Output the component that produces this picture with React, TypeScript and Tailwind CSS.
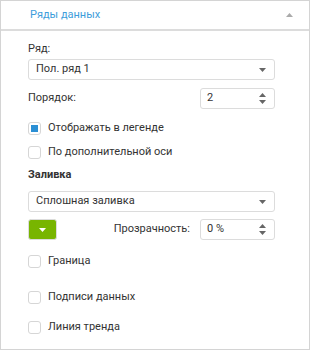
import type { ReactNode } from "react";

const font = { fontFamily: 'Roboto, "Noto Sans", sans-serif' };

function DownArrow({ className = "" }: { className?: string }) {
  return (
    <svg width="7" height="4" viewBox="0 0 7 4" className={className}>
      <path d="M0 0h7L3.5 4z" fill="currentColor" />
    </svg>
  );
}

function UpArrow({ className = "" }: { className?: string }) {
  return (
    <svg width="7" height="4" viewBox="0 0 7 4" className={className}>
      <path d="M0 4h7L3.5 0z" fill="currentColor" />
    </svg>
  );
}

function Select({ value }: { value: string }) {
  return (
    <div className="flex h-[21px] w-[247px] items-center justify-between rounded-[3px] border border-[#dcdcdc] bg-white pl-[7px] pr-[8px] text-[11px] text-[#333]">
      <span>{value}</span>
      <DownArrow className="text-[#666]" />
    </div>
  );
}

function Spinner({ value }: { value: string }) {
  return (
    <div className="flex h-[21px] w-[75px] items-center justify-between rounded-[3px] border border-[#dcdcdc] bg-white pl-[6px] pr-[8px] text-[11px] text-[#333]">
      <span>{value}</span>
      <div className="flex flex-col gap-[3px] text-[#666]">
        <UpArrow />
        <DownArrow />
      </div>
    </div>
  );
}

function Check({ checked, children, className = "" }: { checked?: boolean; children: ReactNode; className?: string }) {
  return (
    <div className={`flex h-[16px] items-center gap-[7px] text-[11px] text-[#333] ${className}`}>
      <span className="flex h-[13px] w-[13px] items-center justify-center rounded-[3px] border border-[#d6d6d6] bg-white">
        {checked ? <span className="h-[7px] w-[7px] bg-[#2b8fd4]" /> : null}
      </span>
      <span>{children}</span>
    </div>
  );
}

export default function App() {
  return (
    <div className="h-[350px] w-[310px] border border-[#d4d4d4] bg-white" style={font}>
      <header className="flex h-[30px] items-center justify-between border-b-2 border-[#dcdcdc] pl-[29px] pr-[16px]">
        <span className="text-[11px] text-[#3d9ddb]">Ряды данных</span>
        <UpArrow className="text-[#aaa]" />
      </header>
      <div className="flex flex-col pl-[27px]">
        <div className="mt-[10px] h-[16px] text-[11px] leading-[16px] text-[#333]">Ряд:</div>
        <div className="mt-[2px]">
          <Select value="Пол. ряд 1" />
        </div>
        <div className="mt-[8px] flex w-[247px] items-center justify-between">
          <span className="text-[11px] text-[#333]">Порядок:</span>
          <Spinner value="2" />
        </div>
        <Check checked className="mt-[11px]">
          Отображать в легенде
        </Check>
        <Check className="mt-[8px]">По дополнительной оси</Check>
        <div className="mt-[7px] h-[16px] text-[11px] font-bold leading-[16px] text-[#333]">Заливка</div>
        <div className="mt-[8px]">
          <Select value="Сплошная заливка" />
        </div>
        <div className="mt-[7px] flex w-[247px] items-center">
          <div className="flex h-[21px] w-[29px] items-center justify-center rounded-[3px] border border-[#dcdcdc] bg-[#78b500]">
            <DownArrow className="text-white" />
          </div>
          <span className="ml-auto mr-[10px] text-[11px] text-[#333]">Прозрачность:</span>
          <Spinner value="0 %" />
        </div>
        <Check className="mt-[13px]">Граница</Check>
        <Check className="mt-[20px]">Подписи данных</Check>
        <Check className="mt-[14px]">Линия тренда</Check>
      </div>
    </div>
  );
}
